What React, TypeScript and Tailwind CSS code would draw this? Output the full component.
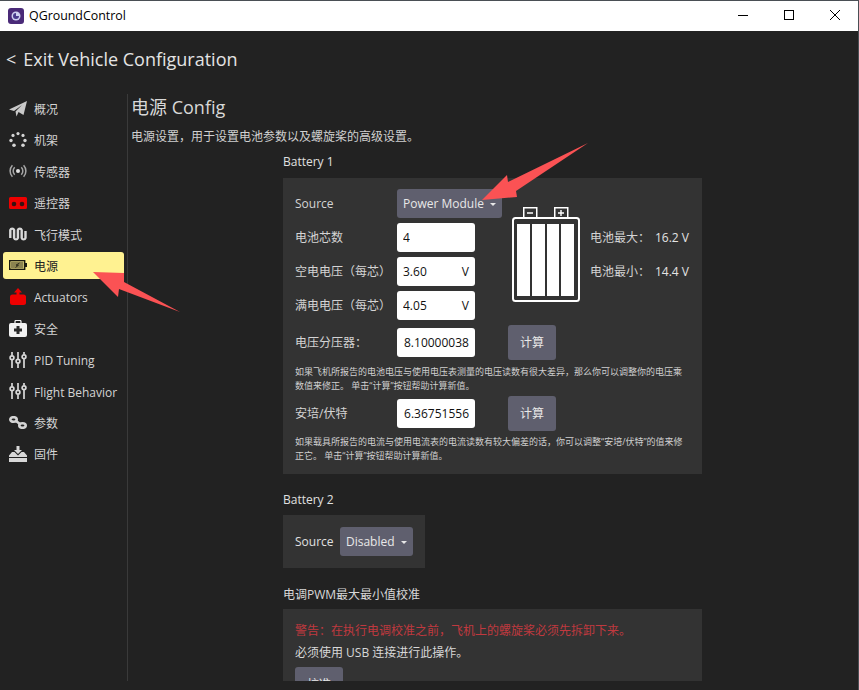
const font = "font-['Open_Sans','Noto_Sans_CJK_SC',sans-serif]";

const Plane = () => (
  <svg viewBox="0 0 18 16" className="h-4 w-[18px]">
    <path d="M0 8.5 18 0 14.5 14 9.5 11 7.5 15.5 6.5 10.5 13 4 5 10Z" fill="#c9c9c9" />
  </svg>
);

const Frame = () => (
  <svg viewBox="0 0 18 15" className="h-[15px] w-[18px]" fill="#d4d4d4">
    <circle cx="9" cy="1.600" r="1.600" />
    <circle cx="14" cy="3.400" r="1.600" />
    <circle cx="4" cy="3.400" r="1.600" />
    <circle cx="2" cy="8.500" r="1.700" />
    <circle cx="16" cy="8.500" r="1.700" />
    <circle cx="5" cy="13.200" r="1.800" />
    <circle cx="14" cy="13.200" r="1.800" />
  </svg>
);

const Sensor = () => (
  <svg viewBox="0 0 18 16" className="h-4 w-[18px]" fill="none" stroke="#a8a8a8" strokeWidth="1.500">
    <circle cx="9" cy="8" r="2" fill="#e0e0e0" stroke="none" />
    <path d="M5.700 4.200a5.500 5.500 0 0 0 0 7.600M12.300 4.200a5.500 5.500 0 0 1 0 7.600" />
    <path d="M3.400 2.200a8.500 8.500 0 0 0 0 11.600M14.600 2.200a8.500 8.500 0 0 1 0 11.600" />
  </svg>
);

const Remote = () => (
  <svg viewBox="0 0 18 12" className="h-3 w-[18px]">
    <path d="M1.500 0h15A1.500 1.500 0 0 1 18 1.500v9a1.500 1.500 0 0 1-1.500 1.500H1.500A1.500 1.500 0 0 1 0 10.500v-9A1.500 1.500 0 0 1 1.500 0Z" fill="#ee0000" />
    <circle cx="5" cy="7" r="2.300" fill="#3a1010" />
    <circle cx="13" cy="7" r="2.300" fill="#3a1010" />
  </svg>
);

const Modes = () => (
  <svg viewBox="0 0 18 16" className="h-4 w-[18px]" fill="none" stroke="#d8d8d8" strokeWidth="2.400">
    <path d="M1.300 12V4a2 2 0 0 1 3.800 0v8a2 2 0 0 0 3.800 0V4a2 2 0 0 1 3.800 0v8a2 2 0 0 0 3.800 0V5" />
  </svg>
);

const BatteryIcon = () => (
  <svg viewBox="0 0 18 10" className="h-[10px] w-[18px]">
    <rect x="0.700" y="0.700" width="15" height="8.600" fill="none" stroke="#1a1a10" strokeWidth="1.400" />
    <rect x="16" y="3" width="2" height="4" fill="#1a1a10" />
    <rect x="2" y="2" width="12.500" height="6" fill="#8a8350" />
    <path d="M10.500 3 7 5.200h2.500L6.500 7.500" fill="none" stroke="#1a1a10" strokeWidth="0.800" />
  </svg>
);

const Actuator = () => (
  <svg viewBox="0 0 18 17" className="h-[17px] w-[18px]" fill="#ee0000">
    <path d="M9 0 13 4.500H10.500V7H7.500V4.500H5Z" />
    <rect x="1" y="6.500" width="16" height="10.500" rx="2.500" />
  </svg>
);

const Safety = () => (
  <svg viewBox="0 0 18 17" className="h-[17px] w-[18px]">
    <path d="M6 3V1.500A1 1 0 0 1 7 .5h4a1 1 0 0 1 1 1V3" fill="none" stroke="#f2f2f2" strokeWidth="1.200" />
    <rect y="3" width="18" height="14" rx="2" fill="#f2f2f2" />
    <path d="M7.500 6h3v2.500H13v3h-2.500V14h-3v-2.500H5v-3h2.500Z" fill="#2a2a2a" />
  </svg>
);

const Sliders = () => (
  <svg viewBox="0 0 18 16" className="h-4 w-[18px]" fill="none" stroke="#d8d8d8" strokeWidth="1.700">
    <path d="M3 0v3.500M3 8V16M9 0v7M9 11.500V16M15 0v2.500M15 7V16" />
    <circle cx="3" cy="5.700" r="1.900" />
    <circle cx="9" cy="9.200" r="1.900" />
    <circle cx="15" cy="4.700" r="1.900" />
  </svg>
);

const Links = () => (
  <svg viewBox="0 0 18 13" className="h-[13px] w-[18px]" fill="none" stroke="#d4d4d4" strokeWidth="2.600">
    <ellipse cx="4.500" cy="3.500" rx="3.200" ry="2.300" />
    <ellipse cx="13.500" cy="9.500" rx="3.200" ry="2.300" />
    <path d="M7 5 11 8" />
  </svg>
);

const Firmware = () => (
  <svg viewBox="0 0 18 16" className="h-4 w-[18px]" fill="#d8d8d8">
    <path d="M7.500 0h3v4H13L9 8 5 4h2.500Z" />
    <path d="M0 9.500 3 6h2.500L9 9.500 12.500 6H15l3 3.500V11H0Z" />
    <rect y="12" width="18" height="4" />
  </svg>
);

const menu = [
  { label: "概况", icon: <Plane /> },
  { label: "机架", icon: <Frame /> },
  { label: "传感器", icon: <Sensor /> },
  { label: "遥控器", icon: <Remote /> },
  { label: "飞行模式", icon: <Modes /> },
  { label: "电源", icon: <BatteryIcon />, active: true },
  { label: "Actuators", icon: <Actuator /> },
  { label: "安全", icon: <Safety /> },
  { label: "PID Tuning", icon: <Sliders /> },
  { label: "Flight Behavior", icon: <Sliders /> },
  { label: "参数", icon: <Links /> },
  { label: "固件", icon: <Firmware /> },
];

function Dropdown({ label, w }: { label: string; w: string }) {
  return (
    <div className={`flex h-[29px] ${w} shrink-0 items-center justify-between rounded-[3px] bg-[#5f5f6e] pl-[6px] pr-[6px] text-[12px] text-[#e8e8e8]`}>
      <span>{label}</span>
      <span className="mt-[1px] h-0 w-0 border-x-[3.500px] border-t-[3.500px] border-x-transparent border-t-[#e8e8e8]" />
    </div>
  );
}

function Field({ value, unit, pad = "pl-[6px]" }: { value: string; unit?: string; pad?: string }) {
  return (
    <div className={`flex h-[29px] w-[78px] shrink-0 items-center justify-between overflow-hidden rounded-[3px] bg-white pr-[6px] text-[12px] text-[#111] ${pad}`}>
      <span className="flex min-w-0 justify-end overflow-hidden whitespace-nowrap">{value}</span>
      {unit && <span>{unit}</span>}
    </div>
  );
}

function Row({ label, children }: { label: string; children: React.ReactNode }) {
  return (
    <div className="flex h-[29px] items-center">
      <span className="w-[102px] shrink-0 text-[12px] text-[#d4d4d4]">{label}</span>
      {children}
    </div>
  );
}

function Calc({ label, value, pad }: { label: string; value: string; pad: string }) {
  return (
    <div className="flex h-[35px] items-center">
      <span className="w-[102px] shrink-0 text-[12px] text-[#d4d4d4]">{label}</span>
      <Field value={value} pad={pad} />
      <div className="ml-[33px] flex h-[35px] w-[48px] items-center justify-center rounded-[3px] bg-[#5f5f6e] text-[12px] text-[#e8e8e8]">计算</div>
    </div>
  );
}

function BatteryArt() {
  return (
    <svg viewBox="0 0 68 95" className="ml-[10px] mt-[18px] h-[95px] w-[68px] shrink-0">
      <rect x="11.750" y="0.750" width="13" height="11" fill="none" stroke="#fff" strokeWidth="1.500" />
      <rect x="42.750" y="0.750" width="13" height="11" fill="none" stroke="#fff" strokeWidth="1.500" />
      <path d="M15 6h6M46 6h6M49 3v6" stroke="#fff" strokeWidth="1.400" />
      <rect x="1" y="11" width="66" height="83" rx="2.500" fill="#333" stroke="#fff" strokeWidth="2" />
      <rect x="5" y="17" width="13" height="72" fill="#fff" />
      <rect x="20" y="17" width="13" height="72" fill="#fff" />
      <rect x="35" y="17" width="12" height="72" fill="#fff" />
      <rect x="49" y="17" width="13" height="72" fill="#fff" />
    </svg>
  );
}

export default function App() {
  return (
    <div className={`relative flex h-[690px] w-[859px] flex-col overflow-hidden border-r border-t border-[#4a4f55] bg-[#222222] ${font}`}>
      {/* Title bar */}
      <div className="flex h-[30px] shrink-0 items-center bg-white text-black">
        <svg viewBox="0 0 16 16" className="ml-2 h-4 w-4">
          <rect width="16" height="16" rx="3" fill="#4a2a78" />
          <circle cx="8" cy="8" r="4.500" fill="#cfd0f0" />
          <path d="M8 5a3 3 0 1 0 3 3H8Z" fill="#4a3a8c" />
        </svg>
        <span className="ml-[5px] text-[12.400px]">QGroundControl</span>
        <div className="ml-auto flex items-center">
          <svg viewBox="0 0 46 30" className="h-[30px] w-[46px]"><path d="M18 14.500h10" stroke="#000" /></svg>
          <svg viewBox="0 0 46 30" className="h-[30px] w-[46px]"><rect x="18.500" y="9.500" width="9" height="9" fill="none" stroke="#000" /></svg>
          <svg viewBox="0 0 46 30" className="h-[30px] w-[46px]"><path d="M18 9l10 10M28 9 18 19" stroke="#000" fill="none" /></svg>
        </div>
      </div>

      {/* Header */}
      <div className="flex h-[63px] shrink-0 items-center pb-[6px] pl-[6px] text-[18px] text-[#e4e4e4]">
        <span className="mr-[7px]">&lt;</span>
        <span>Exit Vehicle Configuration</span>
      </div>

      <div className="flex h-[587px] shrink-0">
        {/* Sidebar */}
        <div className="flex w-[128px] shrink-0 flex-col gap-[4.400px] border-r border-[#3a3a3a] pl-[3px] pr-[3px] pt-[1px]">
          {menu.map((m) => (
            <div
              key={m.label}
              className={`flex h-[27px] shrink-0 items-center rounded-[3px] text-[12px] ${m.active ? "bg-[#fff291] text-[#222]" : "text-[#d4d4d4]"}`}
            >
              <span className="flex w-[31px] pl-[6px]">{m.icon}</span>
              <span className="pt-[3px]">{m.label}</span>
            </div>
          ))}
        </div>

        {/* Content */}
        <div className="min-w-0 flex-1 overflow-hidden pl-[4px] pt-[1px]">
          <div className="-ml-[1px] text-[18px] leading-[24px] text-[#d8d8d8]">电源 Config</div>
          <div className="-ml-[1px] mt-[10px] text-[12px] leading-[16px] text-[#d0d0d0]">电源设置，用于设置电池参数以及螺旋桨的高级设置。</div>

          <div className="ml-[151px] w-[419px]">
            <div className="mt-[8px] text-[12px] leading-[18px] text-[#e0e0e0]">Battery 1</div>
            <div className="mt-[7px] bg-[#333333] px-3 pb-[11px] pt-[11px]">
              <div className="flex">
                <div className="flex w-[207px] shrink-0 flex-col gap-[5px]">
                  <Row label="Source"><Dropdown label="Power Module" w="w-[105px]" /></Row>
                  <Row label="电池芯数"><Field value="4" /></Row>
                  <Row label="空电电压（每芯）"><Field value="3.60" unit="V" /></Row>
                  <Row label="满电电压（每芯）"><Field value="4.05" unit="V" /></Row>
                </div>
                <BatteryArt />
                <div className="ml-[10px] mt-[34px] flex w-[99px] flex-col gap-[5px] text-[12px] text-[#d4d4d4]">
                  <div className="flex h-[29px] items-center justify-between"><span>电池最大：</span><span className="text-[#e4e4e4]">16.2 V</span></div>
                  <div className="flex h-[29px] items-center justify-between"><span>电池最小：</span><span className="text-[#e4e4e4]">14.4 V</span></div>
                </div>
              </div>
              <div className="mt-[5px]">
                <Calc label="电压分压器：" value="8.10000038" pad="pl-[7px]" />
              </div>
              <p className="mt-[5px] text-[9px] leading-[14px] text-[#cfcfcf]">如果飞机所报告的电池电压与使用电压表测量的电压读数有很大差异，那么你可以调整你的电压乘数值来修正。 单击“计算”按钮帮助计算新值。</p>
              <div className="mt-[3px]">
                <Calc label="安培/伏特" value="16.36751556" pad="pl-[7px]" />
              </div>
              <p className="mt-[4px] text-[9px] leading-[14px] text-[#cfcfcf]">如果载具所报告的电流与使用电流表的电流读数有较大偏差的话，你可以调整“安培/伏特”的值来修正它。 单击“计算”按钮帮助计算新值。</p>
            </div>

            <div className="mt-[17px] text-[12px] leading-[18px] text-[#e0e0e0]">Battery 2</div>
            <div className="mt-[6px] flex w-[142px] items-center bg-[#333333] px-3 py-3 text-[12px] text-[#e0e0e0]">
              <span className="w-[45px] shrink-0">Source</span>
              <Dropdown label="Disabled" w="w-[73px]" />
            </div>

            <div className="mt-[18px] text-[12px] leading-[18px] text-[#d8d8d8]">电调PWM最大最小值校准</div>
            <div className="mt-[5px] h-[120px] bg-[#333333] px-3 pt-[13px]">
              <div className="text-[12px] leading-[18px] text-[#c0393f]">警告：在执行电调校准之前，飞机上的螺旋桨必须先拆卸下来。</div>
              <div className="mt-[4px] text-[12px] leading-[18px] text-[#d8d8d8]">必须使用 USB 连接进行此操作。</div>
              <div className="mt-[5px] flex h-[35px] w-[48px] items-center justify-center rounded-[3px] bg-[#5f5f6e] text-[12px] text-[#e8e8e8]">校准</div>
            </div>
          </div>
        </div>
      </div>

      {/* Annotation arrows */}
      <svg viewBox="0 0 859 690" className="pointer-events-none absolute left-0 top-[-1px] h-[690px] w-[859px]">
        <polygon points="93,272 124,273 124,282 180,312 119,289 118,297" fill="#fb5254" />
        <polygon points="482,200 507,175 508,182 588,143 516,191 517,197" fill="#fb5254" />
      </svg>
    </div>
  );
}
